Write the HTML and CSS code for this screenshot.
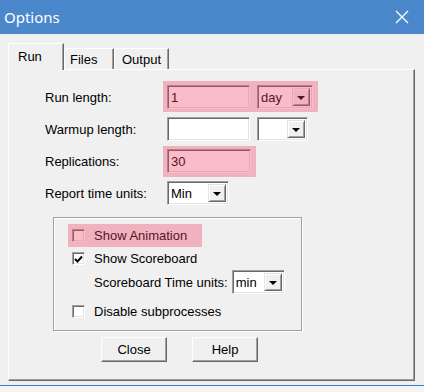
FILE: index.html
```html
<!DOCTYPE html>
<html lang="en">
<head>
    <meta charset="UTF-8">
    <title>Options</title>
    <link rel="stylesheet" href="styles.css">
</head>
<body>
    <div class="window">
        <div class="titlebar">
            <span class="title">Options</span>
            <svg class="close-x" width="14" height="14" viewBox="0 0 14 14">
                <path d="M1 1 L13 13 M13 1 L1 13" stroke="#fff" stroke-width="1.3" fill="none"/>
            </svg>
        </div>

        <div class="client">
            <div class="tabs">
                <div class="tab active tab-run">Run</div>
                <div class="tab tab-files">Files</div>
                <div class="tab tab-output">Output</div>
            </div>

            <div class="panel">
                <div class="form">
                    <div class="label">Run length:</div>
                    <div class="controls hl hl-wide">
                        <div class="edit run-edit">1</div>
                        <div class="combo day-combo"><span class="val">day</span><span class="drop"><i></i></span></div>
                    </div>

                    <div class="label">Warmup length:</div>
                    <div class="controls">
                        <div class="edit warm-edit"></div>
                        <div class="combo warm-combo"><span class="val"></span><span class="drop"><i></i></span></div>
                    </div>

                    <div class="label">Replications:</div>
                    <div class="controls hl hl-narrow">
                        <div class="edit rep-edit">30</div>
                    </div>

                    <div class="label">Report time units:</div>
                    <div class="controls">
                        <div class="combo units-combo"><span class="val">Min</span><span class="drop"><i></i></span></div>
                    </div>
                </div>

                <div class="group">
                    <div class="check-row hl anim-row">
                        <span class="box"></span>
                        <span>Show Animation</span>
                    </div>
                    <div class="check-row">
                        <span class="box">
                            <svg width="11" height="11" viewBox="0 0 11 11"><path d="M2 5 L4.5 7.5 L9 2.5" stroke="#000" stroke-width="2" fill="none"/></svg>
                        </span>
                        <span>Show Scoreboard</span>
                    </div>
                    <div class="sub-row">
                        <span>Scoreboard Time units:</span>
                        <div class="combo sb-combo"><span class="val">min</span><span class="drop"><i></i></span></div>
                    </div>
                    <div class="check-row last">
                        <span class="box"></span>
                        <span>Disable subprocesses</span>
                    </div>
                </div>

                <div class="buttons">
                    <div class="btn">Close</div>
                    <div class="btn">Help</div>
                </div>
            </div>
        </div>
    </div>
</body>
</html>
```

FILE: styles.css
```css
body {
    margin: 0;
    background: #f3f3f3;
    font-family: "Liberation Sans", Arial, sans-serif;
    font-size: 13px;
    color: #000;
}

.window {
    width: 424px;
    height: 385px;
    background: #f0f0f0;
    border-bottom: 1px solid #3d7cc6;
}

.titlebar {
    height: 34px;
    background: #4a87cb;
    display: flex;
    align-items: center;
    justify-content: space-between;
    padding: 0 15px 0 4px;
}

.title {
    color: #fff;
    font-family: "Noto Sans", sans-serif;
    font-size: 15px;
}

.client {
    padding: 9px 9px 0 8px;
}

.tabs {
    display: flex;
    align-items: flex-end;
    height: 26px;
}

.tab {
    height: 21px;
    box-sizing: border-box;
    display: flex;
    align-items: center;
    border-left: 1px solid #fff;
    border-top: 1px solid #fff;
    border-right: 1px solid #696969;
    box-shadow: inset -1px 0 0 #a0a0a0;
    position: relative;
}

.tab-run {
    width: 56px;
    padding-left: 9px;
}

.tab-files {
    width: 50px;
    padding-left: 5px;
}

.tab-output {
    width: 55px;
    padding-left: 7px;
}

.tab.active {
    height: 27px;
    margin-bottom: -1px;
    background: #f0f0f0;
    z-index: 1;
    align-items: flex-start;
    padding-top: 5px;
}

.panel {
    height: 312px;
    box-sizing: border-box;
    border: 1px solid;
    border-color: #fff #696969 #696969 #fff;
    box-shadow: inset -1px -1px 0 #a0a0a0;
    padding: 15px 0 0 36px;
}

.form {
    display: grid;
    grid-template-columns: 122px auto;
    grid-auto-rows: 24px;
    row-gap: 8px;
    align-items: center;
}

.controls {
    display: flex;
    gap: 7px;
    height: 24px;
    align-items: center;
}

.hl {
    position: relative;
}

/* pink marker laid over the highlighted controls */
.hl::after {
    content: "";
    position: absolute;
    inset: 0;
    background: rgba(236, 60, 95, 0.34);
}

.hl-wide {
    margin: -4px 0 -3px -4px;
    padding: 4px 5px 3px 4px;
    width: max-content;
}

.hl-narrow {
    margin: -3px 0 -4px -4px;
    padding: 3px 5px 4px 4px;
    width: max-content;
}

.edit, .combo {
    height: 24px;
    box-sizing: border-box;
    background: #fff;
    border: 1px solid;
    border-color: #a0a0a0 #fff #fff #a0a0a0;
    box-shadow: inset 1px 1px 0 #696969, inset -1px -1px 0 #e3e3e3;
    display: flex;
    align-items: center;
    padding-left: 3px;
}

.run-edit, .warm-edit {
    width: 83px;
}

.rep-edit {
    width: 84px;
}

.combo {
    padding: 2px 2px 2px 3px;
    justify-content: space-between;
}

.day-combo { width: 56px; }
.warm-combo { width: 51px; }
.units-combo { width: 62px; }
.sb-combo { width: 53px; }

.drop {
    width: 18px;
    height: 18px;
    box-sizing: border-box;
    background: #f0f0f0;
    border: 1px solid;
    border-color: #e3e3e3 #696969 #696969 #e3e3e3;
    box-shadow: inset 1px 1px 0 #fff, inset -1px -1px 0 #a0a0a0;
    display: flex;
    align-items: center;
    justify-content: center;
}

.drop i {
    width: 0;
    height: 0;
    border-left: 4px solid transparent;
    border-right: 4px solid transparent;
    border-top: 4px solid #000;
    margin-top: 1px;
}

.group {
    width: 249px;
    height: 114px;
    box-sizing: border-box;
    margin: 12px 0 0 8px;
    border: 1px solid #a0a0a0;
    box-shadow: inset 1px 1px 0 #fff, 1px 1px 0 #fff;
    padding-top: 6px;
    display: flex;
    flex-direction: column;
}

.check-row {
    height: 23px;
    display: flex;
    align-items: center;
    gap: 9px;
    padding-left: 18px;
}

.anim-row {
    width: 134px;
    box-sizing: border-box;
    margin-left: 14px;
    padding-left: 4px;
}

.check-row.last {
    height: 24px;
    margin-top: 5px;
}

.box {
    width: 13px;
    height: 13px;
    box-sizing: border-box;
    background: #fff;
    border: 1px solid;
    border-color: #a0a0a0 #fff #fff #a0a0a0;
    box-shadow: inset 1px 1px 0 #696969, inset -1px -1px 0 #e3e3e3;
    display: flex;
    align-items: center;
    justify-content: center;
}

.box svg {
    margin: 1px 0 0 0;
}

.sub-row {
    height: 24px;
    display: flex;
    align-items: center;
    gap: 4px;
    padding-left: 40px;
}

.buttons {
    display: flex;
    gap: 25px;
    margin: 6px 0 0 56px;
}

.btn {
    width: 66px;
    height: 25px;
    box-sizing: border-box;
    border: 1px solid;
    border-color: #fff #696969 #696969 #fff;
    box-shadow: inset -1px -1px 0 #a0a0a0;
    display: flex;
    align-items: center;
    justify-content: center;
}
```
